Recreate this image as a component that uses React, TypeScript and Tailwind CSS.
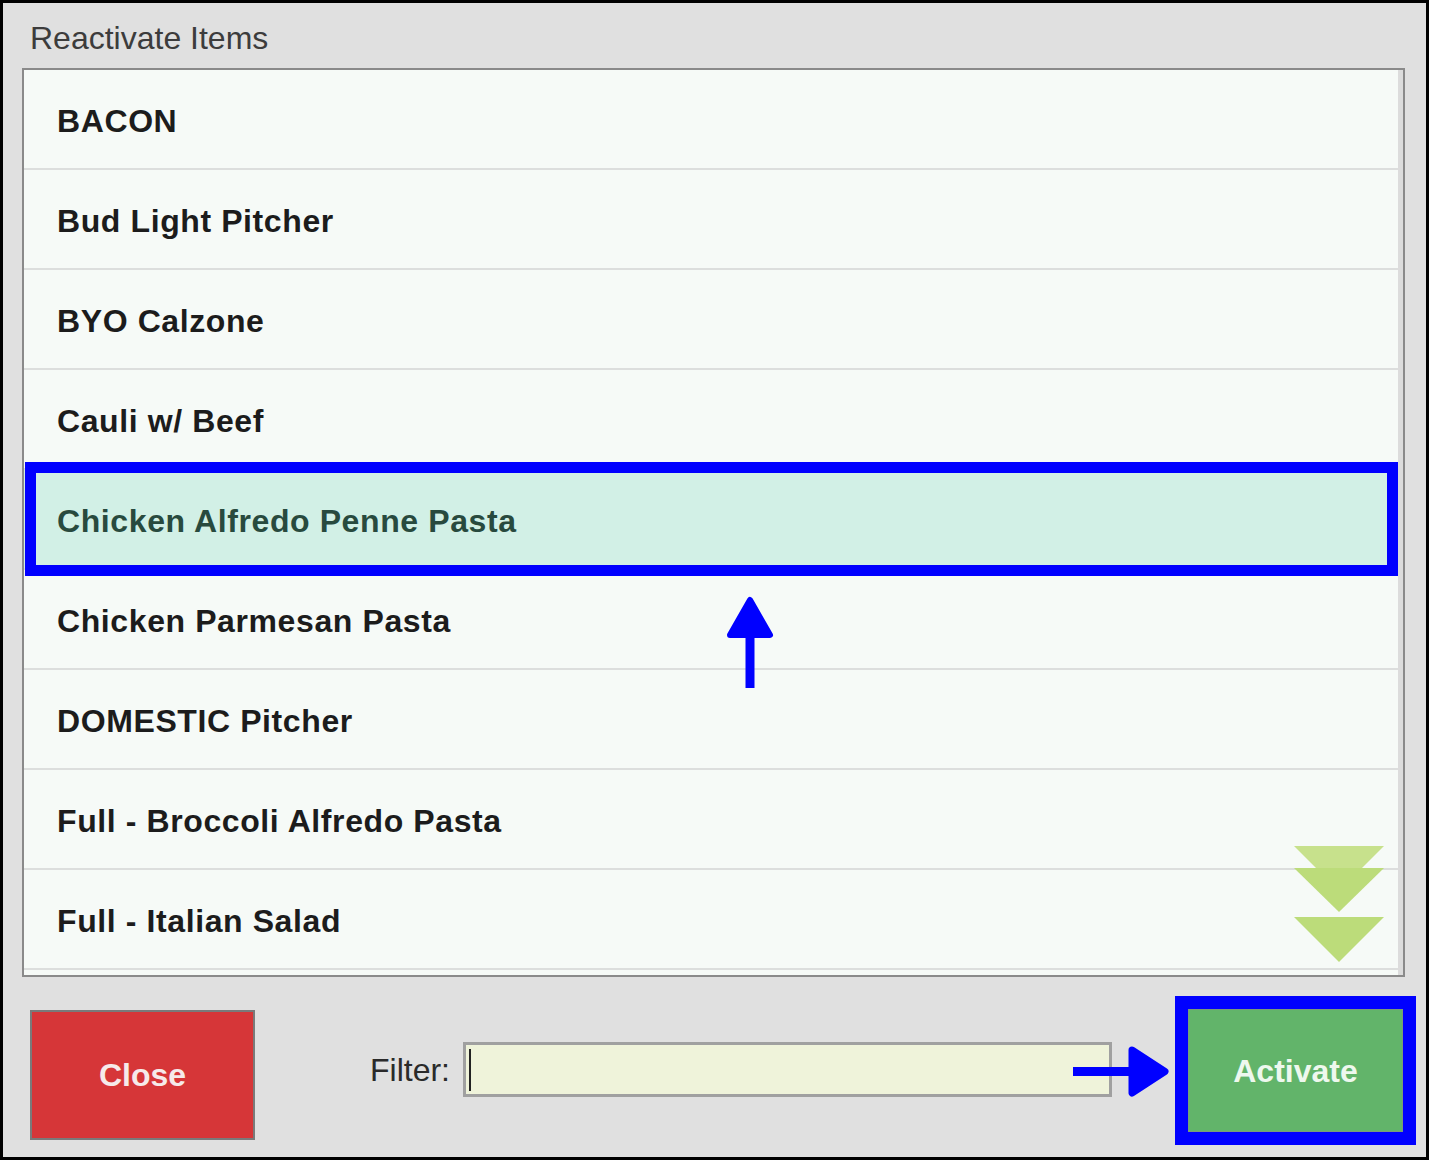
import React from 'react';

const items = [
  'BACON',
  'Bud Light Pitcher',
  'BYO Calzone',
  'Cauli w/ Beef',
  'Chicken Alfredo Penne Pasta',
  'Chicken Parmesan Pasta',
  'DOMESTIC Pitcher',
  'Full - Broccoli Alfredo Pasta',
  'Full - Italian Salad',
];

const selected = 4;

function ScrollDown() {
  return (
    <svg className="absolute left-[1268px] top-[774px]" width="94" height="120" viewBox="0 0 94 120">
      <polygon points="2,2 92,2 47,47" fill="#c7e18c" />
      <polygon points="2,24 92,24 47,68" fill="#bcdc7a" />
      <polygon points="2,73 92,73 47,118" fill="#bcdc7a" />
    </svg>
  );
}

function UpArrow() {
  return (
    <svg className="absolute left-[701px] top-[526px]" width="50" height="94" viewBox="0 0 50 94">
      <polygon points="25,4 45,39 5,39" fill="#0000ff" stroke="#0000ff" strokeWidth="6" strokeLinejoin="round" />
      <rect x="20.5" y="38" width="9" height="54" fill="#0000ff" />
    </svg>
  );
}

function RightArrow() {
  return (
    <svg className="absolute left-[1070px] top-[68px]" width="96" height="54" viewBox="0 0 96 54">
      <rect x="0" y="22" width="62" height="9" fill="#0000ff" />
      <polygon points="59,5 92,26.5 59,48" fill="#0000ff" stroke="#0000ff" strokeWidth="7" strokeLinejoin="round" />
    </svg>
  );
}

export default function App() {
  return (
    <div className="w-[1429px] h-[1160px] border-[3px] border-black bg-[#e0e0e0] flex flex-col font-['Liberation_Sans',Arial,sans-serif]">
      {/* Title */}
      <div className="h-[65px] pl-[27px] pt-[17px] text-[32px] leading-[36px] text-[#3c3c3c]">
        Reactivate Items
      </div>

      {/* Item list */}
      <div className="relative ml-[19px] w-[1383px] h-[909px] border-2 border-[#8a8a8a] bg-[#f6faf7] shadow-[inset_-5px_0_0_#dcdcdc]">
        {items.map((name, i) => (
          <div
            key={name}
            className={
              i === selected
                ? 'relative h-[100px] w-[1374px] flex items-center pl-[33px] pt-[4px] bg-[#d2f0e6] text-[#284a3e] border-b-2 border-[#dcdedd]'
                : 'h-[100px] w-[1374px] flex items-center pl-[33px] pt-[4px] text-[#1c1c1c] border-b-2 border-[#dcdedd]'
            }
          >
            <span className="text-[32px] font-bold tracking-[0.6px] leading-none">{name}</span>
            {i === selected && (
              <div className="absolute left-[1px] right-0 -top-[8px] -bottom-[8px] border-[11px] border-[#0000ff]" />
            )}
          </div>
        ))}
        <UpArrow />
        <ScrollDown />
      </div>

      {/* Bottom bar */}
      <div className="relative flex-1 flex items-start pt-[19px]">
        <button className="ml-[27px] mt-[14px] w-[225px] h-[130px] border-2 border-[#7a7a7a] bg-[#d63638] text-[#f6eaea] text-[32px] font-bold">
          Close
        </button>
        <span className="ml-[115px] mt-[56px] w-[82px] text-[32px] leading-[36px] text-[#2a2a2a]">Filter:</span>
        <div className="ml-[11px] mt-[46px] w-[649px] h-[55px] border-[3px] border-[#a0a0a0] bg-[#eff3da] flex items-center pl-[3px]">
          <div className="w-[2px] h-[42px] bg-[#222]" />
        </div>
        <div className="ml-[63px] w-[241px] h-[149px] border-[13px] border-[#0000ff]">
          <button className="w-full h-full border border-[#7a9a7a] bg-[#62b46a] text-[#eef8ee] text-[32px] font-bold">
            Activate
          </button>
        </div>
        <RightArrow />
      </div>
    </div>
  );
}
